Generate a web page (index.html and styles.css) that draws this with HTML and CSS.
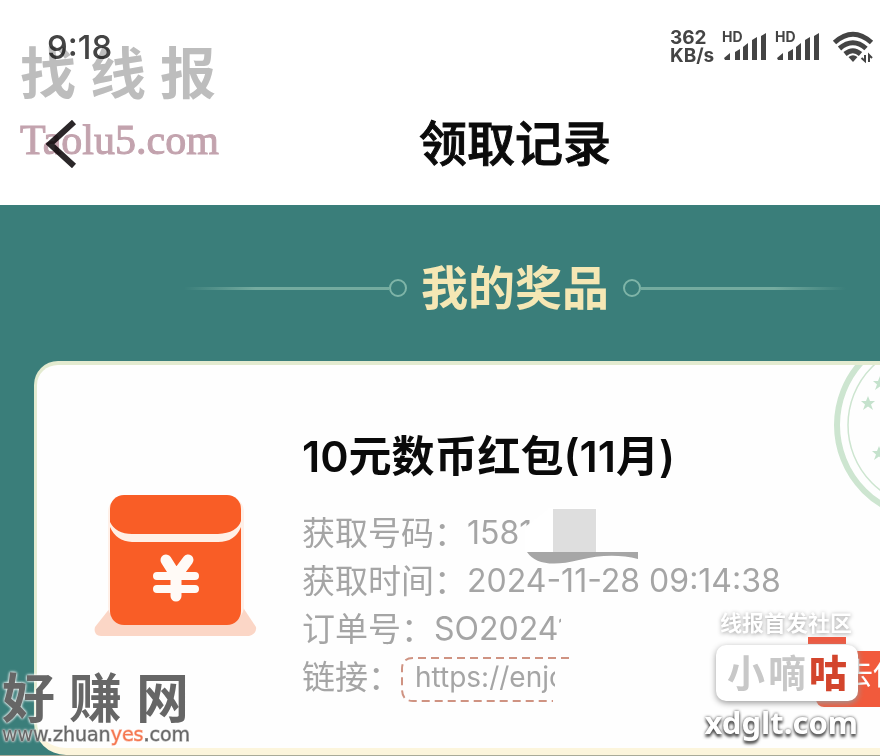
FILE: index.html
```html
<!DOCTYPE html>
<html lang="zh-CN">
<head>
<meta charset="utf-8">
<title>领取记录</title>
<link rel="stylesheet" href="styles.css">
</head>
<body>
<div class="page">
  <header class="top">
    <div class="status">
      <time class="clock">9:18</time>
      <div class="indicators">
        <div class="speed"><span>362</span><span>KB/s</span></div>
        <svg class="signals" width="98" height="34" viewBox="0 0 98 34" aria-hidden="true">
          <g id="signal">
            <text x="0" y="12">HD</text>
            <path d="M2 28 L8 23 V30 H3 Z M13 22 L18 19 V30 H13 Z M21 17 L26 13 V30 H21 Z M30 10 L35 7 V30 H30 Z M39 6 L44 3 V30 H39 Z"/>
          </g>
          <use href="#signal" x="53"/>
        </svg>
        <svg class="wifi" width="42" height="34" viewBox="0 0 42 34" aria-hidden="true">
          <path d="M2.500 12.500 Q21 -4 39.500 12.500 M7.500 18.500 Q21 7 34 18.500 M13 24 Q21 17.500 28.500 24"/>
          <path class="solid" d="M16.500 27 Q21 23.500 25.500 27 L21 32 Z"/>
          <path class="thin" d="M33 25 V31 L29.500 28 M37 32 V25 L40 28"/>
        </svg>
      </div>
    </div>
    <nav class="navbar">
      <button class="back" type="button" aria-label="返回">
        <svg width="32" height="48" viewBox="0 0 32 48"><path d="M28 2 L4 24 L28 46"/></svg>
      </button>
      <h1>领取记录</h1>
    </nav>
  </header>

  <main class="prizes">
    <div class="heading">
      <span class="line"></span><span class="ring"></span>
      <h2>我的奖品</h2>
      <span class="ring"></span><span class="line right"></span>
    </div>

    <article class="card">
      <svg class="stamp" width="46" height="160" viewBox="0 0 46 160" aria-hidden="true">
        <circle cx="96" cy="64" r="93" stroke-width="6"/>
        <circle cx="96" cy="64" r="82" stroke-width="1.500"/>
        <path id="star" d="M34 35 L36 40 L41 40 L37 43.500 L39 49 L34 45.500 L29 49 L31 43.500 L27 40 L32 40 Z"/>
        <use href="#star" x="12" y="-20"/>
        <use href="#star" x="11" y="50"/>
      </svg>
      <svg class="envelope" width="164" height="144" viewBox="0 0 164 144" aria-hidden="true">
        <path fill="#fbd6c6" d="M16 114 L1 133 Q-1 141 7 142 H155 Q163 140 162 133 L148 112 Z"/>
        <rect x="14" y="2" width="136" height="126" rx="16" fill="#fff0e8"/>
        <rect x="16" y="1" width="131" height="130" rx="14" fill="#f95d26"/>
        <path fill="#fff0e6" d="M16 28 Q22 40 38 40 H124 Q143 39 147 27 V33 Q141 48 124 48 H38 Q22 47 16 33 Z"/>
        <g fill="none" stroke="#fffaf6" stroke-linecap="round">
          <path stroke-width="11" d="M72 66 L82 82 L94 66 M82 83 V102"/>
          <path stroke-width="8" d="M63 82 H101 M63 95 H101"/>
        </g>
      </svg>
      <div class="info">
        <h3>10元数币红包(11月)</h3>
        <dl>
          <div class="row"><dt>获取号码：</dt><dd>1581</dd></div>
          <div class="row"><dt>获取时间：</dt><dd>2024-11-28 09:14:38</dd></div>
          <div class="row"><dt>订单号：</dt><dd class="order">SO20241</dd></div>
          <div class="row"><dt>链接：</dt><dd>
            <a class="link" href="#"><svg width="168" height="46" viewBox="0 0 168 46" aria-hidden="true"><path d="M168 1 H12 Q1 1 1 12 V32 Q1 44 12 44 H152"/></svg><span>https://enjo</span></a>
          </dd></div>
        </dl>
        <svg class="smudge" width="156" height="60" viewBox="0 0 156 60" aria-hidden="true">
          <path fill="#fff" d="M0 19 L24 0 H72 V44 H0 Z"/>
          <rect x="28" y="1" width="43" height="43" fill="#dedede"/>
          <path fill="#a6a6a6" d="M2 44 H113 V51 Q86 44 54 52 Q14 62 2 44 Z"/>
        </svg>
      </div>
      <button class="use" type="button">去使用</button>
    </article>
  </main>

  <div class="mark mark-a">
    <div class="spaced"><span>找</span><span>线</span><span>报</span></div>
    <div class="site">Taolu5.com</div>
  </div>
  <div class="mark mark-b">
    <div class="spaced"><span>好</span><span>赚</span><span>网</span></div>
    <div class="site">www.zhuan<b>yes</b>.com</div>
  </div>
  <div class="mark mark-c">
    <div class="tagline">线报首发社区</div>
    <div class="accent"></div>
    <div class="badge"><span>小</span><span>嘀</span><b>咕</b></div>
    <div class="site">xdglt.com</div>
  </div>
</div>
</body>
</html>
```
FILE: styles.css
```css
* { box-sizing: border-box; }
body {
  margin: 0;
  background: #3a7e7a;
  font-family: Inter, "Noto Sans CJK SC", sans-serif;
}
h1, h2, h3, dl, dd { margin: 0; }
button { border: 0; padding: 0; background: none; font: inherit; }
.page {
  position: relative;
  overflow: hidden;
  border-bottom: 1px solid #a9aa98;
}

.top { background: #fff; height: 205px; }
.status {
  display: flex;
  justify-content: space-between;
  align-items: center;
  height: 94px;
  padding: 0 6px 0 47px;
  color: #444;
}
.clock { font-size: 33px; font-weight: 500; }
.indicators { display: flex; align-items: center; }
.speed {
  display: flex;
  flex-direction: column;
  width: 52px;
  font-size: 19px;
  line-height: 18px;
  font-weight: 700;
}
.signals { fill: #444; font-size: 14px; font-weight: 700; }
.wifi { margin-left: 12px; fill: none; stroke: #444; stroke-width: 5; }
.wifi .solid { fill: #444; stroke: none; }
.wifi .thin { stroke-width: 2; }
.navbar { display: flex; align-items: center; height: 100px; padding-left: 46px; }
.back { width: 104px; height: 48px; text-align: left; }
.back svg { display: block; fill: none; stroke: #2b2729; stroke-width: 6; }
.navbar h1 {
  flex: 1;
  text-align: center;
  font-size: 48px;
  line-height: 64px;
  font-weight: 500;
  -webkit-text-stroke: 1px #0b0b0b;
  color: #0b0b0b;
}

.heading {
  display: flex;
  align-items: center;
  justify-content: center;
  height: 156px;
  padding: 10px 0 0 150px;
}
.heading h2 {
  margin: 0 14px;
  font-size: 47px;
  line-height: 64px;
  font-weight: 700;
  color: #f5e7b4;
}
.line { width: 205px; height: 3px; background: linear-gradient(to right, transparent, #74ab9f 35%); }
.line.right { background: linear-gradient(to left, transparent, #74ab9f 35%); }
.ring { width: 18px; height: 18px; border: 2px solid #7fb5a8; border-radius: 50%; }

.card {
  position: relative;
  display: flex;
  margin-left: 34px;
  min-height: 394px;
  padding: 60px 0 0 57px;
  background: #fefefe;
  border: solid #e3ebd0;
  border-width: 4px 0 7px 3px;
  border-bottom-color: #fcf5dc;
  border-radius: 24px 0 0 32px;
  overflow: hidden;
}
.stamp { position: absolute; top: -4px; right: 0; fill: none; stroke: #cde5d0; }
.stamp path { fill: #c5e2cd; stroke: none; }
.envelope { flex: none; margin-top: 69px; }
.info { position: relative; padding-left: 44px; white-space: nowrap; }
.info h3 {
  height: 84px;
  font-size: 43px;
  line-height: 62px;
  font-weight: 600;
  color: #0a0a0a;
}
.row { display: flex; height: 48px; line-height: 48px; font-size: 33px; color: #a5a5a5; }
.row dd { font-size: 32px; }
.row .order { width: 127px; overflow: hidden; }
.link {
  position: relative;
  display: block;
  width: 168px;
  height: 46px;
  margin-top: 4px;
  padding-left: 14px;
  line-height: 40px;
  font-size: 28px;
  color: #a5a5a5;
  text-decoration: none;
}
.link span { display: block; width: 140px; overflow: hidden; }
.link svg {
  position: absolute;
  inset: 0;
  fill: none;
  stroke: #cf9382;
  stroke-width: 2;
  stroke-dasharray: 8 5;
}
.smudge { position: absolute; left: 267px; top: 83px; }
.use {
  position: absolute;
  right: -56px;
  bottom: 41px;
  width: 120px;
  height: 56px;
  padding: 0 0 12px 24px;
  border-radius: 8px;
  background: #f15a3c;
  color: #fff;
  font-size: 30px;
  line-height: 44px;
  white-space: nowrap;
}

.mark { position: absolute; pointer-events: none; white-space: nowrap; font-weight: 700; }
.spaced { display: flex; }
.mark-a { left: 20px; top: 40px; color: #bdbdbd; mix-blend-mode: multiply; }
.mark-a .spaced { gap: 14px; font-size: 56px; line-height: 68px; }
.mark-a .site {
  font: 400 42px/64px "Liberation Serif", serif;
  color: #c3a3ae;
  -webkit-text-stroke: 1px #c3a3ae;
}
.mark-b { left: 2px; bottom: 11px; color: #666; text-shadow: 0 0 3px #fff, 0 0 3px #fff; }
.mark-b .spaced { gap: 14px; font-size: 53px; line-height: 50px; }
.mark-b .site {
  font: 400 19px/20px "DejaVu Sans", sans-serif;
  -webkit-text-stroke: 1px currentColor;
  paint-order: stroke;
}
.mark-b b { font-weight: 400; color: #f5764f; }
.mark-c {
  right: 22px;
  bottom: 12px;
  display: flex;
  flex-direction: column;
  align-items: flex-end;
  color: #fff;
}
.tagline { margin-right: 6px; font-size: 22px; line-height: 28px; text-shadow: 0 1px 4px #999; }
.accent { width: 38px; height: 7px; margin: 0 12px 1px; background: #ee5a42; }
.badge {
  display: flex;
  gap: 3px;
  padding: 0 11px;
  font-size: 38px;
  line-height: 56px;
  border-radius: 10px;
  background: #fff;
  color: #c8c8c8;
  box-shadow: 0 2px 6px #999;
}
.badge b { color: #d3452c; }
.mark-c .site {
  font-family: "Noto Sans", sans-serif;
  font-size: 31px;
  line-height: 42px;
  text-shadow: 0 0 3px #444, 0 3px 3px #555;
}
```
